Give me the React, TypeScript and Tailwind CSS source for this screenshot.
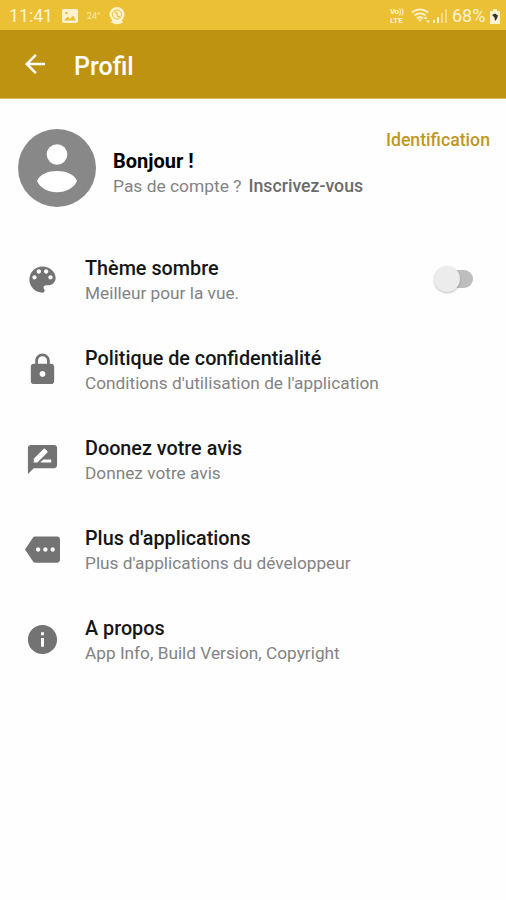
import React, { useState } from "react";

type ItemProps = {
  title: string;
  subtitle: string;
  icon: React.ReactNode;
  children?: React.ReactNode;
};

const Icon = ({ children }: { children: React.ReactNode }) => (
  <svg viewBox="0 0 24 24" className="size-[35px] shrink-0 fill-[#737373]">
    {children}
  </svg>
);

const StatusBar = () => (
  <div className="flex h-[30px] items-center bg-[#ecc035] pl-[9px] pr-[6px] pt-[2px] text-[#fff3cf]">
    <span className="w-[44px] pt-[1px] text-[17.7px] leading-none">11:41</span>
    <svg viewBox="0 0 16 14" className="ml-[9px] h-[14px] w-[16px]">
      <rect width="16" height="14" rx="2" fill="currentColor" />
      <path d="M2 11.5l3.5-4 2.5 2.5 3-3.5 3 5z" fill="#ecc035" />
      <circle cx="4.5" cy="4" r="1.3" fill="#ecc035" />
    </svg>
    <span className="ml-[9px] w-[14px] text-[9px] leading-none opacity-80">
      24°
    </span>
    <svg viewBox="0 0 16 18" className="ml-[8px] h-[18px] w-[16px]">
      <circle cx="8" cy="7.5" r="7.5" fill="currentColor" />
      <path d="M2 15.5q6 3.5 12 0l-2-3H4z" fill="currentColor" />
      <circle cx="8" cy="7.5" r="4.6" fill="none" stroke="#ecc035" />
      <path
        d="M5.5 5.500c2-1 2.500 1 2.500 2s1 3 3 2"
        fill="none"
        stroke="#ecc035"
        strokeWidth="1.3"
      />
    </svg>
    <div className="ml-auto flex items-center">
      <div className="flex w-[15px] flex-col whitespace-nowrap text-[7.8px] font-bold leading-[9px]">
        <span className="tracking-[-0.3px]">Vo))</span>
        <span>LTE</span>
      </div>
      <svg viewBox="0 0 20 16" className="ml-[6px] h-[16px] w-[20px]">
        <g fill="none" stroke="currentColor" strokeWidth="1.8">
          <path d="M.8 4.500Q9 -1.800 17.200 4.500" />
          <path d="M3.400 7.500Q9 3.300 14.600 7.500" />
          <path d="M6 10.300Q9 8.200 12 10.300" />
        </g>
        <path d="M7 11.500h4l-2 2.500zM12.500 11l2-2.500 2 2.500zM15 12.500h4L17 15z" fill="currentColor" />
      </svg>
      <svg viewBox="0 0 14 14" className="ml-[2px] h-[14px] w-[14px] fill-current">
        <path d="M0 11h2v3H0zM4 8h2v6H4z" />
        <path d="M8 4h2v10H8zM12 0h2v14h-2z" opacity=".5" />
      </svg>
      <span className="ml-[5px] w-[34px] text-[18px] leading-none">68%</span>
      <svg viewBox="0 0 10 15" className="ml-[4px] h-[15px] w-[10px]">
        <path d="M3 0h4v2h3v13H0V2h3z" fill="#fff3cf" />
        <path d="M2 6l3-1.500 3 2-1 3-2 2.500-.5-3.500z" fill="#333" />
      </svg>
    </div>
  </div>
);

const Header = () => (
  <header className="flex h-[69px] items-center border-b border-[#d9bd5d] bg-[#bf9312] pl-[25px] text-white">
    <svg viewBox="4 4 16 16" className="size-[20px] fill-current">
      <path d="M20 11H7.830l5.590-5.590L12 4l-8 8 8 8 1.410-1.410L7.830 13H20v-2z" />
    </svg>
    <h1 className="ml-[29px] pt-[4px] text-[25px] font-medium leading-none">Profil</h1>
  </header>
);

const Item = ({ title, subtitle, icon, children }: ItemProps) => (
  <li className="flex h-[90px] items-center pl-[25px] pr-[33px]">
    {icon}
    <div className="ml-[25px] whitespace-nowrap pt-[2px]">
      <h2 className="text-[19.8px] font-medium leading-[26px] text-[#161616]">{title}</h2>
      <p className="text-[17.25px] leading-[22px] text-[#838383]">{subtitle}</p>
    </div>
    {children}
  </li>
);

const App = () => {
  const [dark, setDark] = useState(false);

  return (
    <div className="h-[900px] w-[506px] overflow-hidden bg-[#fefefe] font-[Roboto,sans-serif]">
      <StatusBar />
      <Header />
      {/* account */}
      <section className="flex h-[135px] pl-[18px] pr-[16px]">
        <svg viewBox="0 0 78 78" className="mt-[29.5px] size-[78px] shrink-0">
          <circle cx="39" cy="39" r="39" fill="#888" />
          <circle cx="39" cy="25.500" r="10.300" fill="#fff" />
          <path
            d="M19 52C22 45 30 42 39 42s17 3 20 10c-3 7-11 11.200-20 11.200S22 59 19 52z"
            fill="#fff"
          />
        </svg>
        <div className="ml-[17px] mt-[49px] whitespace-nowrap">
          <h2 className="text-[20px] font-bold leading-[26px] text-black">Bonjour !</h2>
          <p className="text-[17.4px] leading-[25px] text-[#838383]">
            Pas de compte ?
            <span className="ml-[7px] text-[17.7px] font-medium text-[#6c6c6c]">
              Inscrivez-vous
            </span>
          </p>
        </div>
        <button className="ml-auto mt-[28px] h-[24px] text-[17.7px] font-medium text-[#bf981f]">
          Identification
        </button>
      </section>
      {/* settings */}
      <ul>
        <Item
          title="Thème sombre"
          subtitle="Meilleur pour la vue."
          icon={
            <Icon>
              <path d="M12 3c-4.970 0-9 4.030-9 9s4.030 9 9 9c.83 0 1.500-.67 1.500-1.500 0-.39-.15-.74-.39-1.010-.23-.26-.38-.61-.38-.99 0-.83.67-1.500 1.500-1.500H16c2.760 0 5-2.240 5-5 0-4.420-4.030-8-9-8zm-5.500 9c-.83 0-1.500-.67-1.500-1.500S5.670 9 6.500 9 8 9.670 8 10.500 7.330 12 6.500 12zm3-4C8.670 8 8 7.330 8 6.500S8.670 5 9.500 5s1.500.67 1.500 1.500S10.330 8 9.500 8zm5 0c-.83 0-1.500-.67-1.500-1.500S13.670 5 14.500 5s1.500.67 1.500 1.500S15.330 8 14.500 8zm3 4c-.83 0-1.500-.67-1.500-1.500S16.670 9 17.500 9s1.500.67 1.500 1.500-.67 1.500-1.500 1.500z" />
            </Icon>
          }
        >
          <button
            role="switch"
            aria-checked={dark}
            onClick={() => setDark(!dark)}
            className="ml-auto flex h-[18px] w-[36px] items-center rounded-full bg-[#bdbdbd]"
          >
            <span className="-ml-[3px] size-[26px] shrink-0 rounded-full bg-[#ececec] shadow-[0_1px_2px_rgba(0,0,0,0.25)]" />
          </button>
        </Item>
        <Item
          title="Politique de confidentialité"
          subtitle="Conditions d'utilisation de l'application"
          icon={
            <Icon>
              <path d="M18 8h-1V6c0-2.760-2.240-5-5-5S7 3.240 7 6v2H6c-1.100 0-2 .9-2 2v10c0 1.100.9 2 2 2h12c1.100 0 2-.9 2-2V10c0-1.100-.9-2-2-2zm-6 9c-1.100 0-2-.9-2-2s.9-2 2-2 2 .9 2 2-.9 2-2 2zm3.100-9H8.900V6c0-1.710 1.390-3.100 3.100-3.100 1.710 0 3.100 1.390 3.100 3.100v2z" />
            </Icon>
          }
        />
        <Item
          title="Doonez votre avis"
          subtitle="Donnez votre avis"
          icon={
            <Icon>
              <path d="M20 2H4c-1.100 0-1.990.9-1.990 2L2 22l4-4h14c1.100 0 2-.9 2-2V4c0-1.100-.9-2-2-2zM6 14v-2.470l6.880-6.880c.2-.2.510-.2.710 0l1.770 1.770c.2.2.2.510 0 .710L8.470 14H6zm12 0h-7.500l2-2H18v2z" />
            </Icon>
          }
        />
        <Item
          title="Plus d'applications"
          subtitle="Plus d'applications du développeur"
          icon={
            <Icon>
              <path d="M22 3H7c-.69 0-1.230.35-1.590.88L0 12l5.410 8.110c.36.53.97.89 1.660.89H22c1.100 0 2-.9 2-2V5c0-1.100-.9-2-2-2zM9 13.500c-.83 0-1.500-.67-1.500-1.500s.67-1.500 1.500-1.500 1.500.67 1.500 1.500-.67 1.500-1.500 1.500zm5 0c-.83 0-1.500-.67-1.500-1.500s.67-1.500 1.500-1.500 1.500.67 1.500 1.500-.67 1.500-1.500 1.500zm5 0c-.83 0-1.500-.67-1.500-1.500s.67-1.500 1.500-1.500 1.500.67 1.500 1.500-.67 1.500-1.500 1.500z" />
            </Icon>
          }
        />
        <Item
          title="A propos"
          subtitle="App Info, Build Version, Copyright"
          icon={
            <Icon>
              <path d="M12 2C6.480 2 2 6.480 2 12s4.480 10 10 10 10-4.480 10-10S17.520 2 12 2zm1 15h-2v-6h2v6zm0-8h-2V7h2v2z" />
            </Icon>
          }
        />
      </ul>
    </div>
  );
};

export default App;
